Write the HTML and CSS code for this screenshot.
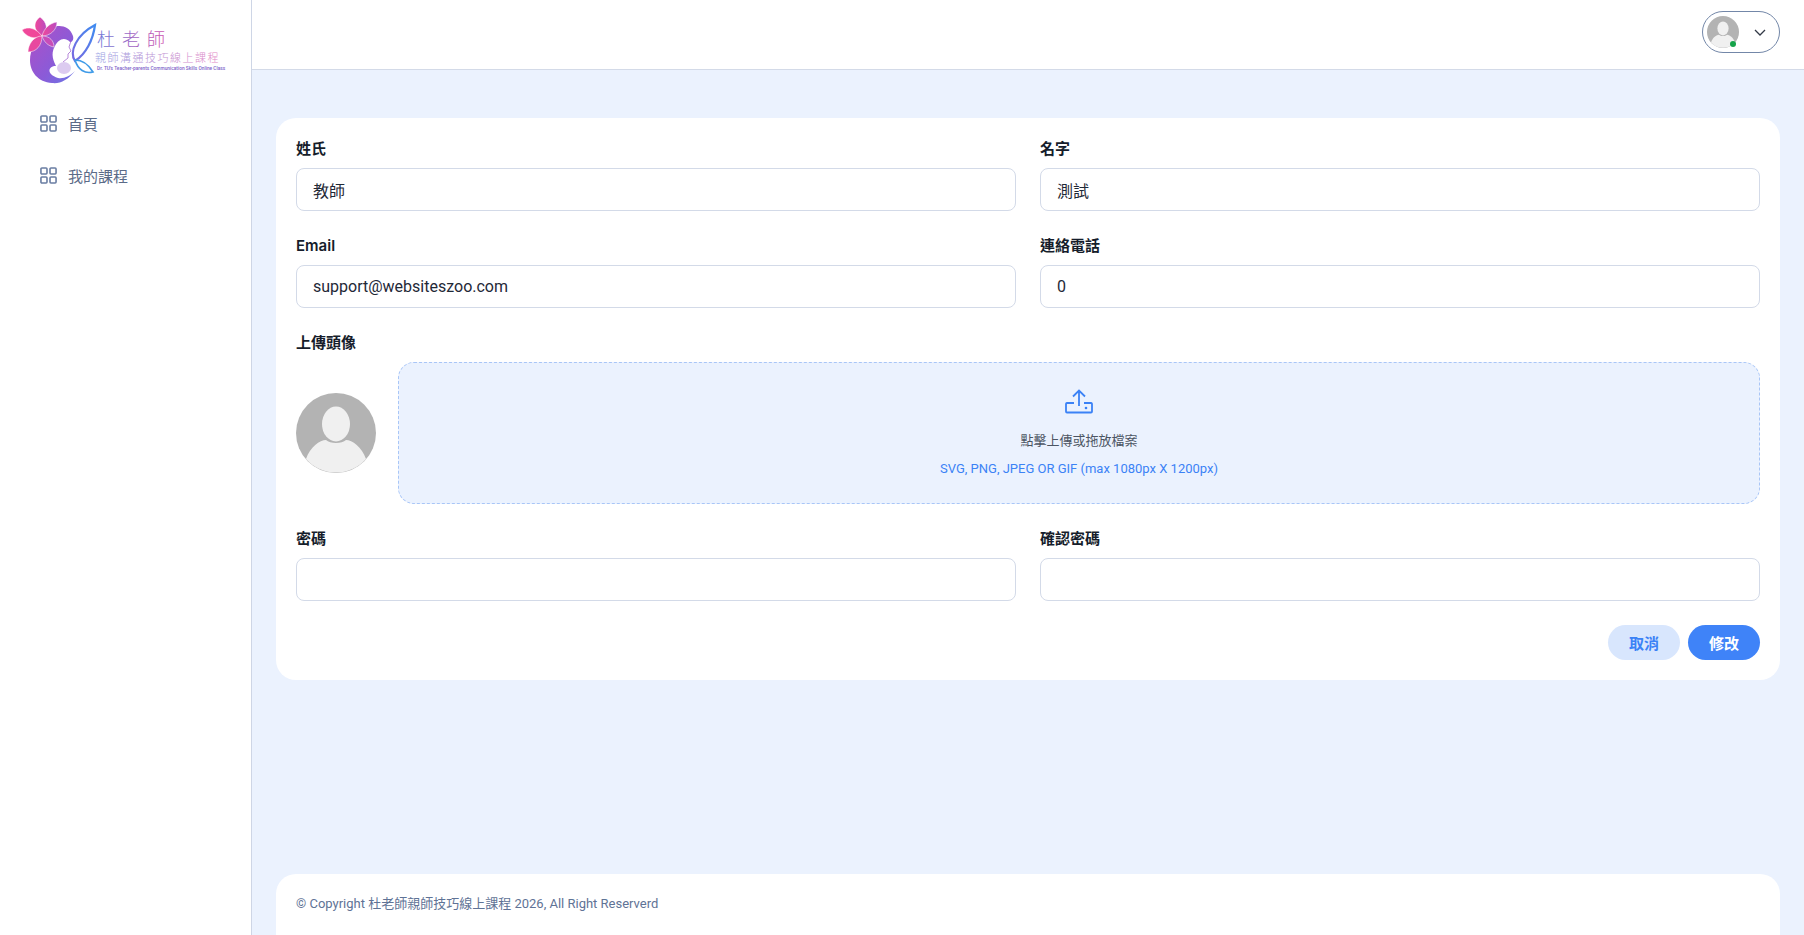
FILE: index.html
```html
<!doctype html>
<html lang="zh-Hant">
<head>
	<meta charset="UTF-8">
	<title>個人資料</title>
	<link rel="stylesheet" href="styles.css">
</head>
<body>
	<svg class="defs" width="0" height="0">
		<symbol id="person" viewBox="0 0 80 80">
			<circle cx="40" cy="40" r="40" fill="#b3b3b3"/>
			<ellipse cx="40" cy="31" rx="14" ry="17.500" fill="#f0f0f0"/>
			<path d="M10 66C14 54 24 47 30 47C34 51 46 51 50 47C56 47 66 54 70 66A40 40 0 0 1 10 66Z" fill="#f0f0f0"/>
		</symbol>
		<symbol id="grid" viewBox="0 0 18 18">
			<g fill="none" stroke="currentColor" stroke-width="1.7">
				<rect x="1" y="1" width="6.400" height="6.400" rx="1"/>
				<rect x="10.600" y="1" width="6.400" height="6.400" rx="1"/>
				<rect x="1" y="10.600" width="6.400" height="6.400" rx="1"/>
				<rect x="10.600" y="10.600" width="6.400" height="6.400" rx="1"/>
			</g>
		</symbol>
	</svg>

	<div class="app">
		<aside class="sidebar">
			<svg class="logo" width="251" height="90" viewBox="0 0 251 90">
				<defs>
					<linearGradient id="moon" x1="0" y1="0" x2="1" y2="1">
						<stop offset="0" stop-color="#b04fc6"/>
						<stop offset=".6" stop-color="#8a5bd8"/>
						<stop offset="1" stop-color="#6a78e6"/>
					</linearGradient>
					<linearGradient id="wing" x1="1" y1="0" x2="0" y2="1">
						<stop offset="0" stop-color="#3f8bf0"/>
						<stop offset="1" stop-color="#7a68e0"/>
					</linearGradient>
					<linearGradient id="petal" x1="0" y1=".5" x2="1" y2=".5">
						<stop offset="0" stop-color="#f0489a"/>
						<stop offset="1" stop-color="#b84cc0"/>
					</linearGradient>
					<linearGradient id="title" x1="0" y1="0" x2="1" y2="0">
						<stop offset="0" stop-color="#6f78d8"/>
						<stop offset="1" stop-color="#d651ad"/>
					</linearGradient>
				</defs>
				<path d="M45 32C52 25 68 22 73 36C74 40 72 42 70 42C64 36 58 40 55 46C50 54 54 62 56 66C48 66 46 74 58 78C64 79 70 76 75 71C68 80 60 84 52 83C38 82 30 72 30 60C30 50 36 38 45 32Z" fill="url(#moon)"/>
				<path d="M71 41L69 47L71 51L68 54L68 58L63 62" fill="none" stroke="#a56ad0" stroke-width=".8"/>
				<ellipse cx="64" cy="68" rx="7" ry="6" fill="#dccbf0"/>
				<path d="M95 25C93 40 86 54 75 61C69 52 76 35 95 25Z" fill="#fff" stroke="url(#wing)" stroke-width="2.200"/>
				<path d="M75 60C84 60 90 67 93 72C85 74 78 70 75 60Z" fill="#fff" stroke="#3f9be8" stroke-width="1.700"/>
				<g fill="url(#petal)" stroke="#fff" stroke-width=".5">
					<path d="M42 36C33 30 33 22 40 17C47 22 49 30 42 36Z"/>
					<path d="M42 36C44 28 50 23 57 22C57 30 50 36 42 36Z"/>
					<path d="M42 36C36 28 28 26 22 30C26 37 34 40 42 36Z" fill="#f0489a"/>
					<path d="M42 36C34 36 28 44 28 52C36 52 42 46 42 36Z" fill="#e8489f"/>
					<path d="M42 36C44 42 48 46 54 47C54 41 50 36 42 36Z" fill="#c84cb8"/>
				</g>
				<text class="logo-big" x="97" y="46" fill="url(#title)">杜老師</text>
				<text class="logo-mid" x="95" y="62" fill="url(#title)">親師溝通技巧線上課程</text>
				<text class="logo-small" x="97" y="70" fill="#7d62c9">Dr. TU's Teacher-parents Communication Skills Online Class</text>
			</svg>
			<nav class="menu">
				<a class="menu-item"><svg class="menu-icon"><use href="#grid"/></svg>首頁</a>
				<a class="menu-item"><svg class="menu-icon"><use href="#grid"/></svg>我的課程</a>
			</nav>
		</aside>

		<div class="content">
			<header class="topbar">
				<button class="user-pill">
					<span class="user-pic">
						<svg width="32" height="32"><use href="#person"/></svg>
						<i class="online"></i>
					</span>
					<svg class="chevron" width="12" height="7" viewBox="0 0 12 7"><path d="M1 1l5 5 5-5" fill="none" stroke="#333a47" stroke-width="1.3"/></svg>
				</button>
			</header>

			<main class="main">
				<form class="card form">
					<div class="row">
						<label class="field"><span class="label">姓氏</span><input class="input" value="教師"></label>
						<label class="field"><span class="label">名字</span><input class="input" value="測試"></label>
					</div>
					<div class="row">
						<label class="field"><span class="label">Email</span><input class="input" value="support@websiteszoo.com"></label>
						<label class="field"><span class="label">連絡電話</span><input class="input" value="0"></label>
					</div>
					<div class="upload">
						<span class="label">上傳頭像</span>
						<div class="upload-body">
							<svg class="avatar" width="80" height="80"><use href="#person"/></svg>
							<div class="dropzone">
								<svg class="upload-icon" width="28" height="25" viewBox="0 0 28 25">
									<g fill="none" stroke="#3b82f6" stroke-width="1.800">
										<path d="M14 17V2M8 7.500L14 1.500 20 7.500"/>
										<path d="M9 14H2a1.200 1.200 0 0 0-1 1v7.500a1 1 0 0 0 1 1h24a1 1 0 0 0 1-1V15a1.200 1.200 0 0 0-1-1h-7"/>
									</g>
									<circle cx="21" cy="19" r="1.300" fill="#3b82f6"/>
								</svg>
								<p class="drop-title">點擊上傳或拖放檔案</p>
								<p class="drop-hint">SVG, PNG, JPEG OR GIF (max 1080px X 1200px)</p>
							</div>
						</div>
					</div>
					<div class="row">
						<label class="field"><span class="label">密碼</span><input class="input" type="password"></label>
						<label class="field"><span class="label">確認密碼</span><input class="input" type="password"></label>
					</div>
					<div class="actions">
						<button class="btn btn-light" type="button">取消</button>
						<button class="btn btn-primary" type="button">修改</button>
					</div>
				</form>

				<footer class="card footer">© Copyright 杜老師親師技巧線上課程 2026, All Right Reserverd</footer>
			</main>
		</div>
	</div>
</body>
</html>
```

FILE: styles.css
```css
*{
	margin: 0;
	padding: 0;
	box-sizing: border-box;
}
html,body{
	height: 100%;
	overflow: hidden;
}
body{
	font-family: Roboto, "Noto Sans CJK TC", sans-serif;
	background-color: #ebf2fe;
	color: #1f2937;
}
.defs{
	display: block;
	height: 0;
}
.app{
	display: flex;
	height: 100%;
}
.sidebar{
	width: 252px;
	flex-shrink: 0;
	background-color: #fff;
	border-right: 1px solid #ced6e6;
}
.logo{
	display: block;
}
.logo-big{
	font-family: "Noto Sans CJK TC", sans-serif;
	font-size: 18px;
	font-weight: 300;
	letter-spacing: 7px;
}
.logo-mid{
	font-family: "Noto Sans CJK TC", sans-serif;
	font-size: 11px;
	font-weight: 300;
	letter-spacing: 1.5px;
	opacity: .7;
}
.logo-small{
	font-family: Roboto, sans-serif;
	font-size: 4.8px;
	font-weight: 500;
}
.menu{
	display: flex;
	flex-direction: column;
	gap: 20px;
	padding: 17px 0 0 40px;
}
.menu-item{
	display: flex;
	align-items: center;
	gap: 11px;
	height: 32px;
	font-size: 15px;
	color: #5b6b88;
}
.menu-icon{
	width: 17px;
	height: 17px;
	color: #6a7ea3;
}
.content{
	flex: 1;
	min-width: 0;
	display: flex;
	flex-direction: column;
}
.topbar{
	height: 70px;
	flex-shrink: 0;
	display: flex;
	justify-content: flex-end;
	padding: 11px 24px 0 0;
	background-color: #fff;
	border-bottom: 1px solid #d3dae8;
}
.user-pill{
	width: 78px;
	height: 42px;
	display: flex;
	align-items: center;
	gap: 15px;
	padding-left: 4px;
	background: none;
	border: 1px solid #7387a8;
	border-radius: 21px;
}
.user-pic{
	position: relative;
	width: 32px;
	height: 32px;
}
.user-pic svg{
	display: block;
}
.online{
	position: absolute;
	right: 3px;
	bottom: 1px;
	width: 6px;
	height: 6px;
	border-radius: 50%;
	background-color: #16a34a;
}
.main{
	padding: 48px 24px 0;
}
.card{
	background-color: #fff;
	border-radius: 20px;
}
.form{
	height: 562px;
	padding: 20px;
}
.row{
	display: flex;
	gap: 24px;
	margin-bottom: 24px;
}
.field{
	flex: 1;
	display: block;
}
.label{
	display: block;
	height: 20px;
	margin-bottom: 10px;
	font-family: Inter, "Noto Sans CJK TC", sans-serif;
	font-size: 15px;
	line-height: 21px;
	font-weight: 600;
	color: #161d2b;
}
.input{
	display: block;
	width: 100%;
	height: 43px;
	padding: 0 16px;
	font-family: Roboto, "Noto Sans CJK TC", sans-serif;
	font-size: 16px;
	color: #1f2937;
	background-color: #fff;
	border: 1px solid #d3dae8;
	border-radius: 8px;
	outline: none;
}
.upload{
	margin-bottom: 24px;
}
.upload-body{
	display: flex;
	align-items: center;
	gap: 22px;
}
.avatar{
	flex-shrink: 0;
}
.dropzone{
	flex: 1;
	height: 142px;
	display: flex;
	flex-direction: column;
	align-items: center;
	padding-top: 26px;
	background-color: #ebf2fe;
	border: 1px dashed #a9c6f7;
	border-radius: 16px;
}
.upload-icon{
	display: block;
	margin-bottom: 17px;
}
.drop-title{
	font-size: 13px;
	line-height: 20px;
	color: #4b5563;
	margin-bottom: 8px;
}
.drop-hint{
	font-size: 13px;
	line-height: 20px;
	color: #3b82f6;
}
.actions{
	display: flex;
	justify-content: flex-end;
	gap: 8px;
	margin-top: 24px;
}
.btn{
	width: 72px;
	height: 35px;
	font-family: Inter, "Noto Sans CJK TC", sans-serif;
	font-size: 15px;
	font-weight: 600;
	border: none;
	border-radius: 18px;
}
.btn-light{
	background-color: #d8e6fd;
	color: #3b82f6;
}
.btn-primary{
	background-color: #3f83f8;
	color: #fff;
}
.footer{
	height: 80px;
	margin-top: 194px;
	padding: 20px;
	font-size: 13px;
	line-height: 20px;
	color: #5f7396;
}
```
